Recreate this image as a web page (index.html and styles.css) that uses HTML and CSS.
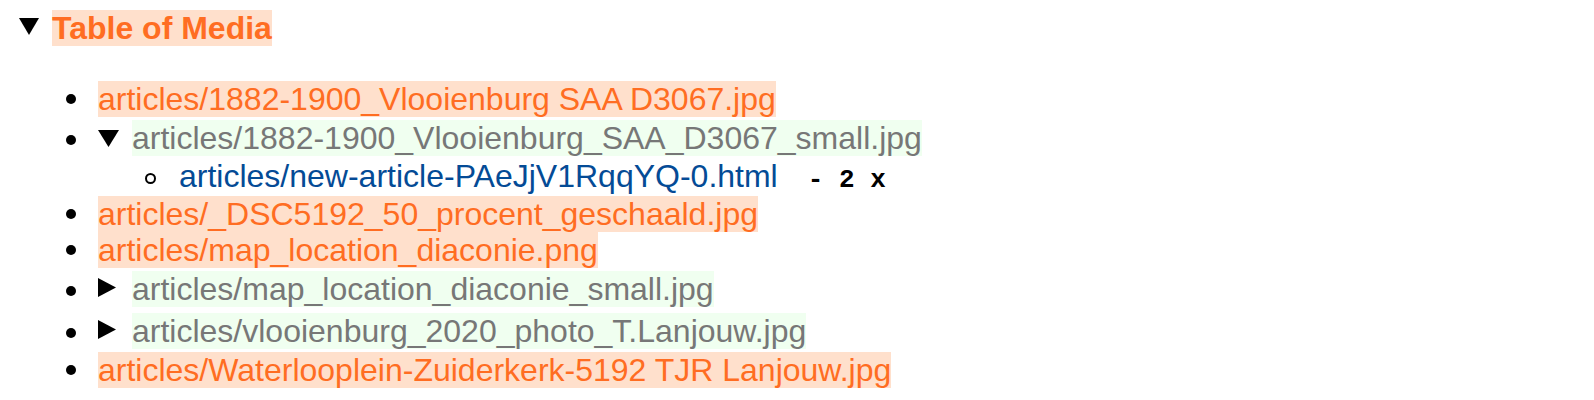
FILE: index.html
```html
<!DOCTYPE html>
<html lang="en">
<head>
<meta charset="utf-8">
<title>Table of Media</title>
<link rel="stylesheet" href="styles.css">
</head>
<body>
<details class="toc" open>
  <summary class="toc-title">
    <svg class="tri tri-title" viewBox="0 0 20 17" aria-hidden="true"><polygon points="0,0 20,0 10,17"/></svg>
    <span class="title-text">Table of Media</span>
  </summary>
  <ul class="media-list">
    <li class="item"><span class="name unused">articles/1882-1900_Vlooienburg SAA D3067.jpg</span></li>
    <li class="item used">
      <details class="media" open>
        <summary class="media-sum">
          <svg class="tri tri-down" viewBox="0 0 21 17" aria-hidden="true"><polygon points="0,0 21,0 10.5,17"/></svg>
          <span class="name inuse">articles/1882-1900_Vlooienburg_SAA_D3067_small.jpg</span>
        </summary>
        <ul class="refs">
          <li class="ref"><span class="ref-line"><a class="ref-link" href="#">articles/new-article-PAeJjV1RqqYQ-0.html</a><span class="count">- 2 x</span></span></li>
        </ul>
      </details>
    </li>
    <li class="item"><span class="name unused">articles/_DSC5192_50_procent_geschaald.jpg</span></li>
    <li class="item"><span class="name unused">articles/map_location_diaconie.png</span></li>
    <li class="item used">
      <details class="media">
        <summary class="media-sum">
          <svg class="tri tri-right" viewBox="0 0 18 19" aria-hidden="true"><polygon points="0,0 18,9.5 0,19"/></svg>
          <span class="name inuse">articles/map_location_diaconie_small.jpg</span>
        </summary>
      </details>
    </li>
    <li class="item used">
      <details class="media">
        <summary class="media-sum">
          <svg class="tri tri-right" viewBox="0 0 18 19" aria-hidden="true"><polygon points="0,0 18,9.5 0,19"/></svg>
          <span class="name inuse">articles/vlooienburg_2020_photo_T.Lanjouw.jpg</span>
        </summary>
      </details>
    </li>
    <li class="item"><span class="name unused">articles/Waterlooplein-Zuiderkerk-5192 TJR Lanjouw.jpg</span></li>
  </ul>
</details>
</body>
</html>
```

FILE: styles.css
```css
html, body {
  background: #ffffff;
}

body {
  margin: 0;
  padding: 7px 0 0 16px;
  font-family: "Liberation Sans", Arial, Helvetica, sans-serif;
  font-size: 32px;
  color: #000000;
}

summary {
  list-style: none;
  cursor: pointer;
}

summary::-webkit-details-marker {
  display: none;
}

.tri {
  flex: none;
  fill: #000000;
}

.toc-title {
  display: flex;
  align-items: center;
  height: 42px;
}

.tri-title {
  width: 20px;
  height: 17px;
  margin: -3px 13px 0 3px;
}

.title-text {
  display: inline-block;
  height: 36px;
  line-height: 36px;
  font-weight: bold;
  color: #ff6d22;
  background: #ffe0cc;
}

.media-list {
  list-style: none;
  margin: 32px 0 0;
  padding: 0 0 0 50px;
}

.item {
  display: flex;
  align-items: flex-start;
}

.item::before {
  content: "";
  flex: none;
  width: 10px;
  height: 10px;
  border-radius: 50%;
  background: #000000;
  margin: 13px 22px 0 0;
}

.item.used::before {
  margin-top: 18px;
}

.name {
  display: inline-block;
  height: 36px;
  line-height: 36px;
  white-space: nowrap;
}

.unused {
  color: #ff6d22;
  background: #ffe0cc;
}

.inuse {
  color: #777777;
  background: #f0fff0;
}

.media-sum {
  display: flex;
  align-items: center;
  height: 42px;
}

.tri-down {
  width: 21px;
  height: 17px;
  margin: 1px 13px 0 0;
}

.tri-right {
  width: 18px;
  height: 19px;
  margin: -3px 16px 0 0;
}

.refs {
  list-style: none;
  margin: 0;
  padding: 0 0 0 47px;
}

.ref {
  display: flex;
  align-items: center;
  height: 37px;
}

.ref::before {
  content: "";
  flex: none;
  box-sizing: border-box;
  width: 11px;
  height: 11px;
  border: 2px solid #000000;
  border-radius: 50%;
  margin: 2px 23px 0 0;
}

.ref-line {
  line-height: 36px;
  white-space: nowrap;
}

.ref-link {
  color: #044b96;
  text-decoration: none;
}

.count {
  font-family: "Liberation Mono", "Courier New", monospace;
  font-size: 26px;
  font-weight: bold;
  margin-left: 30px;
  white-space: pre;
  color: #000000;
}
```
